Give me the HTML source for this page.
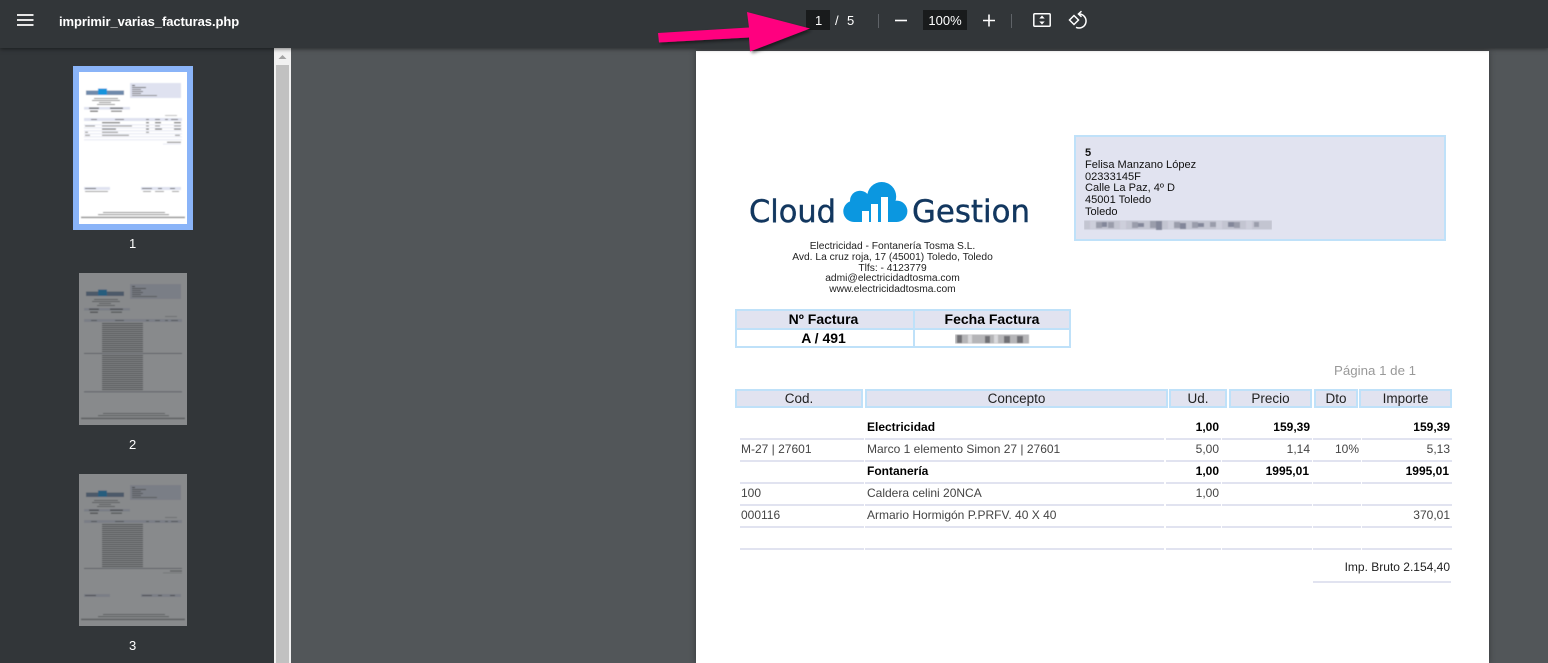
<!DOCTYPE html>
<html><head><meta charset="utf-8"><style>
*{box-sizing:border-box}
html,body{margin:0;padding:0;width:1548px;height:663px;overflow:hidden;background:#525659;font-family:"Liberation Sans",sans-serif}
.a{position:absolute;white-space:nowrap}
#tb{position:absolute;left:0;top:0;width:1548px;height:48px;background:#323639;box-shadow:0 1px 4px rgba(0,0,0,.5);z-index:5}
#side{position:absolute;left:0;top:48px;width:274px;height:615px;background:#323639}
#sb{position:absolute;left:274px;top:48px;width:17px;height:615px;background:#f1f1f1}
#page{position:absolute;left:696px;top:51px;width:793px;height:612px;background:#fff;box-shadow:0 0 6px rgba(0,0,0,.35)}
.h{position:absolute;background:#e1e3f0;border:2px solid #bfe1f9;color:#222;font-size:13.5px;line-height:15px;text-align:center}
.t{position:absolute;font-size:12px;line-height:14px;color:#444;white-space:nowrap}
.b{font-weight:bold;color:#000}
.r{text-align:right}
.n{position:absolute;font-size:13px;color:#fff;white-space:nowrap}
.co{position:absolute;left:735px;width:315px;text-align:center;font-size:10.25px;line-height:12px;color:#222}
.cl{position:absolute;left:1085px;font-size:11.05px;line-height:12px;color:#111;white-space:nowrap}
</style></head><body>
<svg width="0" height="0" style="position:absolute"><defs>
<filter id="bl" x="-5%" y="-5%" width="110%" height="110%"><feGaussianBlur stdDeviation=".55"/></filter>
<pattern id="tx" width="41" height="2" patternUnits="userSpaceOnUse"><rect width="41" height="1" fill="#444"/></pattern>
<g id="hd">
<rect x="-3" y="-3" width="114" height="158" fill="#fff"/>
<rect x="51" y="11" width="51" height="15" fill="#dfe2f0"/>
<rect x="53" y="13" width="3" height="1" fill="#333"/><rect x="53" y="15" width="14" height="1" fill="#666"/><rect x="53" y="17" width="9" height="1" fill="#777"/><rect x="53" y="19" width="11" height="1" fill="#777"/><rect x="53" y="21" width="9" height="1" fill="#777"/><rect x="53" y="23" width="25" height="1" fill="#888"/>
<rect x="7" y="18.500" width="12" height="4.500" fill="#6f8aab"/><rect x="19" y="16.500" width="9" height="6.500" fill="#1594dc"/><rect x="28" y="18.500" width="17" height="4.500" fill="#6f8aab"/>
<rect x="15" y="26" width="24" height="1" fill="#888"/><rect x="13" y="28" width="28" height="1" fill="#888"/><rect x="20" y="30" width="12" height="1" fill="#888"/><rect x="18" y="32" width="18" height="1" fill="#888"/>
<rect x="5" y="35" width="46" height="2.6" fill="#dfe2f0"/><rect x="10" y="35.500" width="10" height="1.400" fill="#666"/><rect x="31" y="35.500" width="13" height="1.400" fill="#666"/>
<rect x="11" y="38.600" width="8" height="1.200" fill="#555"/><rect x="32" y="38.600" width="11" height="1.200" fill="#777"/>
<rect x="86" y="43" width="12" height="1" fill="#bbb"/>
<rect x="5" y="46" width="98" height="3" fill="#dfe2f0"/>
<rect x="12" y="47" width="6" height="1" fill="#777"/><rect x="36" y="47" width="9" height="1" fill="#777"/><rect x="67" y="47" width="3" height="1" fill="#777"/><rect x="76" y="47" width="5" height="1" fill="#777"/><rect x="86" y="47" width="3" height="1" fill="#777"/><rect x="92" y="47" width="7" height="1" fill="#777"/>
</g>
<g id="ft">
<rect x="24" y="140" width="62" height=".9" fill="#777"/><rect x="19" y="142.200" width="71" height=".9" fill="#777"/><rect x="2" y="144.600" width="104" height="1.600" fill="#999"/>
</g>
</defs></svg>

<div id="side"></div>
<div id="sb">
<svg class="a" style="left:0;top:0" width="17" height="17"><path d="M4.500 11L8.500 7L12.500 11Z" fill="#a3a3a3"/></svg>
<div class="a" style="left:2px;top:17px;width:13px;height:598px;background:#c1c1c1"></div>
</div>

<div class="a" style="left:73px;top:66px;width:120px;height:164px;background:#8ab4f8"></div>
<svg class="a" style="left:79px;top:72px" width="108" height="152"><g filter="url(#bl)">
<use href="#hd"/>
<rect x="23" y="50.200" width="18" height="1" fill="#444"/><rect x="67" y="50.200" width="3" height="1" fill="#444"/><rect x="76" y="50.200" width="6" height="1" fill="#444"/><rect x="95" y="50.200" width="7" height="1" fill="#444"/>
<rect x="5" y="52.400" width="98" height=".8" fill="#dfe2f0"/>
<rect x="6" y="53.500" width="10" height="1" fill="#888"/><rect x="23" y="53.500" width="30" height="1" fill="#888"/><rect x="67" y="53.500" width="3" height="1" fill="#888"/><rect x="76" y="53.500" width="5" height="1" fill="#888"/><rect x="95" y="53.500" width="7" height="1" fill="#888"/>
<rect x="5" y="55.400" width="98" height=".8" fill="#dfe2f0"/>
<rect x="23" y="56.600" width="14" height="1" fill="#444"/><rect x="67" y="56.600" width="3" height="1" fill="#444"/><rect x="76" y="56.600" width="7" height="1" fill="#444"/><rect x="95" y="56.600" width="7" height="1" fill="#444"/>
<rect x="5" y="58.400" width="98" height=".8" fill="#dfe2f0"/>
<rect x="6" y="59.800" width="3" height="1" fill="#888"/><rect x="23" y="59.800" width="16" height="1" fill="#888"/><rect x="67" y="59.800" width="3" height="1" fill="#888"/>
<rect x="5" y="61.400" width="98" height=".8" fill="#dfe2f0"/>
<rect x="6" y="62.800" width="5" height="1" fill="#888"/><rect x="23" y="62.800" width="27" height="1" fill="#888"/><rect x="96" y="62.800" width="5" height="1" fill="#888"/>
<rect x="5" y="64.400" width="98" height=".8" fill="#dfe2f0"/><rect x="5" y="67.400" width="98" height=".8" fill="#dfe2f0"/>
<rect x="88" y="69.800" width="14" height="1" fill="#777"/><rect x="84" y="71.800" width="18" height=".7" fill="#dfe2f0"/>
<rect x="5" y="115" width="26" height="3" fill="#dfe2f0"/><rect x="6" y="116" width="11" height="1" fill="#666"/><rect x="6" y="119" width="23" height="1" fill="#999"/>
<rect x="62" y="115" width="40" height="3" fill="#dfe2f0"/><rect x="63" y="116" width="10" height="1" fill="#666"/><rect x="79" y="116" width="4" height="1" fill="#666"/><rect x="91" y="116" width="5" height="1" fill="#666"/><rect x="64" y="119" width="8" height="1" fill="#999"/><rect x="76" y="119" width="9" height="1" fill="#999"/><rect x="93" y="119" width="7" height="1" fill="#999"/>
<use href="#ft"/>
</g></svg>

<div class="a" style="left:129px;top:236px;font-size:13px;color:#fff;line-height:15px">1</div>

<svg class="a" style="left:79px;top:273px" width="108" height="152"><g filter="url(#bl)" opacity=".42">
<use href="#hd"/>
<rect x="23" y="50" width="41" height="30" fill="url(#tx)"/><rect x="23" y="82" width="41" height="36" fill="url(#tx)"/>
<rect x="5" y="80" width="98" height=".8" fill="#778"/><rect x="5" y="118.400" width="98" height=".8" fill="#778"/>
<use href="#ft"/>
</g></svg>
<div class="a" style="left:129px;top:437px;font-size:13px;color:#fff;line-height:15px">2</div>

<svg class="a" style="left:79px;top:474px" width="108" height="152"><g filter="url(#bl)" opacity=".42">
<use href="#hd"/>
<rect x="23" y="50" width="41" height="44" fill="url(#tx)"/>
<rect x="5" y="94" width="98" height=".8" fill="#778"/>
<rect x="91" y="96.500" width="12" height="1" fill="#555"/><rect x="84" y="98.500" width="19" height=".7" fill="#bbb"/>
<rect x="5" y="120" width="26" height="3" fill="#dfe2f0"/><rect x="6" y="121" width="11" height="1" fill="#555"/>
<rect x="62" y="120" width="40" height="3" fill="#dfe2f0"/><rect x="63" y="121" width="10" height="1" fill="#555"/><rect x="79" y="121" width="4" height="1" fill="#555"/><rect x="91" y="121" width="5" height="1" fill="#555"/>
<use href="#ft"/>
</g></svg>
<div class="a" style="left:129px;top:638px;font-size:13px;color:#fff;line-height:15px">3</div>

<div id="page"></div>

<!-- logo -->
<svg class="a" style="left:740px;top:175px" width="300" height="56">
<text x="9" y="47" font-family="DejaVu Sans" font-size="31" fill="#12375f" textLength="87" lengthAdjust="spacingAndGlyphs" stroke="#12375f" stroke-width=".4">Cloud</text>
<text x="172" y="47" font-family="DejaVu Sans" font-size="31" fill="#12375f" textLength="118" lengthAdjust="spacingAndGlyphs" stroke="#12375f" stroke-width=".4">Gestion</text>
<g fill="#0b97e0">
<circle cx="141.700" cy="21.500" r="14.500"/><circle cx="120" cy="25.700" r="10"/><circle cx="114" cy="36.300" r="10.700"/><circle cx="156.700" cy="36.300" r="10.700"/>
<rect x="114" y="26" width="43" height="21"/>
</g>
<g fill="#fff"><rect x="122" y="36" width="7" height="12"/><rect x="131" y="29" width="7" height="19"/><rect x="141" y="22" width="7" height="26"/></g>
</svg>

<div class="co" style="top:241px">Electricidad - Fontanería Tosma S.L.</div>
<div class="co" style="top:252px">Avd. La cruz roja, 17 (45001) Toledo, Toledo</div>
<div class="co" style="top:263px">Tlfs: - 4123779</div>
<div class="co" style="top:273px">admi@electricidadtosma.com</div>
<div class="co" style="top:284px">www.electricidadtosma.com</div>

<!-- client box -->
<div class="a" style="left:1074px;top:135px;width:372px;height:106px;background:#e1e3f0;border:2px solid #bfe1f9"></div>
<div class="cl" style="top:147px;font-weight:bold">5</div>
<div class="cl" style="top:159px">Felisa Manzano López</div>
<div class="cl" style="top:171px">02333145F</div>
<div class="cl" style="top:182px">Calle La Paz, 4º D</div>
<div class="cl" style="top:194px">45001 Toledo</div>
<div class="cl" style="top:206px">Toledo</div>
<svg class="a" style="left:1084px;top:219px" width="188" height="12"><g filter="url(#bl)">
<rect y="1.500" width="188" height="9" fill="#c3c5d1"/>
<g fill="#9a9dab"><rect x="12" y="3" width="6" height="6"/><rect x="24" y="3" width="6" height="6"/><rect x="48" y="3" width="6" height="6"/><rect x="66" y="2" width="6" height="7"/><rect x="90" y="3" width="6" height="6"/><rect x="108" y="3" width="6" height="6"/><rect x="126" y="3" width="6" height="5"/><rect x="150" y="3" width="6" height="6"/><rect x="170" y="3" width="5" height="5"/></g>
<g fill="#83879a"><rect x="18" y="3" width="5" height="5"/><rect x="54" y="4" width="6" height="4"/><rect x="72" y="2" width="6" height="9"/><rect x="96" y="4" width="6" height="6"/><rect x="114" y="4" width="6" height="4"/><rect x="144" y="3" width="6" height="5"/></g>
<g fill="#cdcfdb"><rect x="6" y="2" width="6" height="8"/><rect x="36" y="2" width="6" height="8"/><rect x="84" y="2" width="6" height="8"/><rect x="132" y="2" width="6" height="8"/><rect x="162" y="2" width="6" height="8"/></g>
</g></svg>

<!-- factura table -->
<div class="h" style="left:735px;top:309px;width:178px;height:20px;font-size:14px;font-weight:bold;color:#000;line-height:17px;border-bottom:0;border-right:0;padding-right:3px">Nº Factura</div>
<div class="h" style="left:913px;top:309px;width:158px;height:20px;font-size:14px;font-weight:bold;color:#000;line-height:17px;border-bottom:0">Fecha Factura</div>
<div class="h" style="left:735px;top:328px;width:178px;height:20px;background:#fff;font-size:14px;font-weight:bold;color:#000;line-height:17px;border-right:0;padding-right:3px">A / 491</div>
<div class="h" style="left:913px;top:328px;width:158px;height:20px;background:#fff"></div>
<svg class="a" style="left:955px;top:333px" width="75" height="12"><g filter="url(#bl)">
<rect x="0" y="1.500" width="74" height="9" fill="#b5b5b8"/>
<g fill="#707074"><rect x="2" y="2" width="5" height="8"/><rect x="30" y="3" width="5" height="7"/><rect x="49" y="3" width="6" height="7"/><rect x="62" y="3" width="6" height="7"/></g>
<rect x="13" y="2" width="4" height="8" fill="#d9d9dc"/><rect x="39" y="2" width="4" height="8" fill="#d9d9dc"/>
</g></svg>

<div class="a" style="left:1334px;top:363px;font-size:13.3px;line-height:15px;color:#999">Página 1 de 1</div>

<!-- main header -->
<div class="h" style="left:735px;top:389px;width:128px;height:19px">Cod.</div>
<div class="h" style="left:865px;top:389px;width:303px;height:19px">Concepto</div>
<div class="h" style="left:1169px;top:389px;width:58px;height:19px">Ud.</div>
<div class="h" style="left:1229px;top:389px;width:83px;height:19px">Precio</div>
<div class="h" style="left:1314px;top:389px;width:44px;height:19px">Dto</div>
<div class="h" style="left:1359px;top:389px;width:93px;height:19px">Importe</div>

<!-- row lines -->
<svg class="a" style="left:0;top:0" width="1548" height="663"><g fill="#e1e3f0">
<path d="M740 438h124v2h-124zM865 438h299v2h-299zM1166 438h55v2h-55zM1222 438h90v2h-90zM1313 438h48v2h-48zM1362 438h90v2h-90z"/>
<path d="M740 460h124v2h-124zM865 460h299v2h-299zM1166 460h55v2h-55zM1222 460h90v2h-90zM1313 460h48v2h-48zM1362 460h90v2h-90z"/>
<path d="M740 482h124v2h-124zM865 482h299v2h-299zM1166 482h55v2h-55zM1222 482h90v2h-90zM1313 482h48v2h-48zM1362 482h90v2h-90z"/>
<path d="M740 504h124v2h-124zM865 504h299v2h-299zM1166 504h55v2h-55zM1222 504h90v2h-90zM1313 504h48v2h-48zM1362 504h90v2h-90z"/>
<path d="M740 526h124v2h-124zM865 526h299v2h-299zM1166 526h55v2h-55zM1222 526h90v2h-90zM1313 526h48v2h-48zM1362 526h90v2h-90z"/>
<path d="M740 548h124v2h-124zM865 548h299v2h-299zM1166 548h55v2h-55zM1222 548h90v2h-90zM1313 548h48v2h-48zM1362 548h90v2h-90z"/>
<path d="M1313 581h138v2h-138z"/>
</g></svg>

<!-- rows -->
<div class="t b" style="left:867px;top:420px">Electricidad</div>
<div class="t b r" style="left:1160px;width:59px;top:420px">1,00</div>
<div class="t b r" style="left:1230px;width:80px;top:420px">159,39</div>
<div class="t b r" style="left:1370px;width:80px;top:420px">159,39</div>

<div class="t" style="left:741px;top:442px">M-27 | 27601</div>
<div class="t" style="left:867px;top:442px">Marco 1 elemento Simon 27 | 27601</div>
<div class="t r" style="left:1160px;width:59px;top:442px">5,00</div>
<div class="t r" style="left:1230px;width:80px;top:442px">1,14</div>
<div class="t r" style="left:1320px;width:39px;top:442px">10%</div>
<div class="t r" style="left:1370px;width:80px;top:442px">5,13</div>

<div class="t b" style="left:867px;top:464px">Fontanería</div>
<div class="t b r" style="left:1160px;width:59px;top:464px">1,00</div>
<div class="t b r" style="left:1230px;width:79px;top:464px">1995,01</div>
<div class="t b r" style="left:1370px;width:79px;top:464px">1995,01</div>

<div class="t" style="left:741px;top:486px">100</div>
<div class="t" style="left:867px;top:486px">Caldera celini 20NCA</div>
<div class="t r" style="left:1160px;width:59px;top:486px">1,00</div>

<div class="t" style="left:741px;top:508px">000116</div>
<div class="t" style="left:867px;top:508px">Armario Hormigón P.PRFV. 40 X 40</div>
<div class="t r" style="left:1370px;width:80px;top:508px">370,01</div>

<div class="t r" style="left:1300px;width:150px;top:560px;color:#222">Imp. Bruto 2.154,40</div>

<!-- toolbar -->
<div id="tb">
<svg class="a" style="left:17px;top:14px" width="17" height="13"><path d="M0 1h16.500M0 6h16.500M0 11h16.500" stroke="#fff" stroke-width="1.700" fill="none"/></svg>
<div class="n" style="left:59px;top:14px;font-size:13px;font-weight:bold;line-height:15px;letter-spacing:-.07px">imprimir_varias_facturas.php</div>
<div class="a" style="left:806px;top:10px;width:24px;height:20px;background:#191b1c"></div>
<div class="n" style="left:815px;top:13px;line-height:15px">1</div>
<div class="n" style="left:835px;top:13px;line-height:15px">/</div>
<div class="n" style="left:847px;top:13px;line-height:15px">5</div>
<div class="a" style="left:878px;top:14px;width:1px;height:14px;background:#5f6368"></div>
<svg class="a" style="left:894px;top:14px" width="14" height="14"><path d="M1 6.500h12" stroke="#fff" stroke-width="1.600"/></svg>
<div class="a" style="left:923px;top:10px;width:44px;height:20px;background:#191b1c"></div>
<div class="n" style="left:923px;top:13px;width:44px;text-align:center;line-height:15px">100%</div>
<svg class="a" style="left:982px;top:14px" width="14" height="14"><path d="M1 6.500h12M7 .5v12" stroke="#fff" stroke-width="1.600"/></svg>
<div class="a" style="left:1011px;top:14px;width:1px;height:14px;background:#5f6368"></div>
<svg class="a" style="left:1032px;top:12px" width="20" height="16"><rect x="1.800" y="1.800" width="16.400" height="12.400" rx="1" fill="none" stroke="#fff" stroke-width="1.500"/><path d="M10 3.500l2.700 3h-5.400zM10 12.500l2.700-3h-5.400z" fill="#fff"/></svg>
<svg class="a" style="left:1068px;top:10px" width="20" height="20" fill="none" stroke="#fff" stroke-width="1.500"><path d="M1.500 10L6 5.500L10.500 10L6 14.500Z"/><path d="M11 4A7 7 0 1 1 8 17.300"/><path d="M13.500 1.200L10.400 4l3.100 2.800" stroke-width="1.400"/></svg>
</div>

<!-- arrow -->
<svg class="a" style="left:650px;top:5px;z-index:6" width="170" height="56">
<defs><filter id="sh" x="-10%" y="-20%" width="120%" height="150%"><feDropShadow dx="2" dy="2" stdDeviation="1.500" flood-color="#000" flood-opacity=".5"/></filter></defs>
<path d="M8 28L99 22.500L97 7L160 23.500L100 46.500L99 32.500L9 37.500Z" fill="#ff007f" filter="url(#sh)"/>
</svg>
</body></html>
